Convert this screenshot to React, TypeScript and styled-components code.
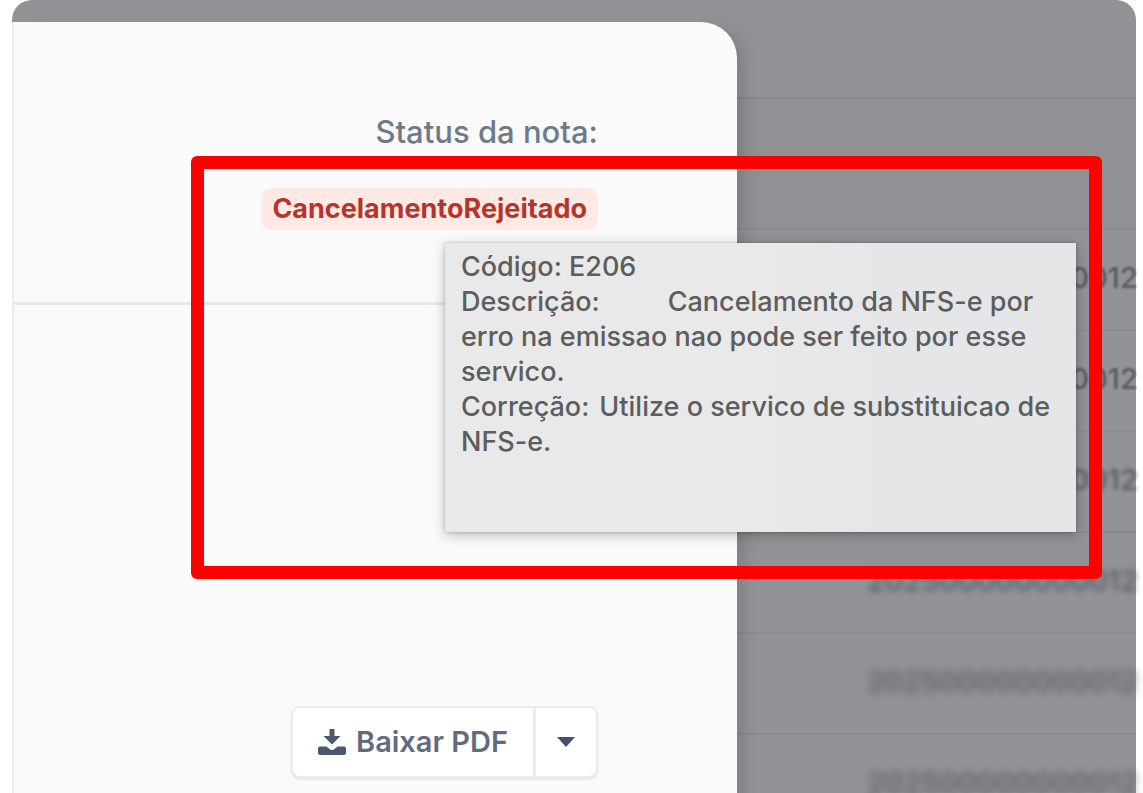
import React from "react";
import styled, { createGlobalStyle } from "styled-components";

const GlobalStyle = createGlobalStyle`
  * { box-sizing: border-box; }
  body {
    margin: 0;
    height: 100vh;
    overflow: hidden;
    background: #ffffff;
    font-family: Inter, "Liberation Sans", sans-serif;
  }
`;

const Backdrop = styled.main`
  display: grid;
  grid-template-columns: minmax(0, 1fr) 399px;
  height: 100vh;
  margin: 0 7px 0 12px;
  background: #929396;
  border-radius: 20px 20px 0 0;
`;

const Modal = styled.section`
  position: relative;
  z-index: 1;
  margin-top: 22px;
  background: #fafafa;
  border-left: 2px solid #ececec;
  border-radius: 0 36px 0 0;
  box-shadow: 14px 0 20px -12px rgba(40, 42, 48, 0.3);
`;

const StatusArea = styled.div`
  display: flex;
  flex-direction: column;
  align-items: flex-end;
  height: 283px;
  padding: 92px 139px 0 0;
  border-bottom: 3px solid #e6e7e9;
`;

const StatusLabel = styled.div`
  color: #6f7a89;
  font-size: 31px;
  font-weight: 500;
  line-height: 36px;
`;

const BadgeAnchor = styled.div`
  position: relative;
  margin-top: 38px;
`;

const Badge = styled.div`
  padding: 0 11px;
  border-radius: 10px;
  background: #ffe9e4;
  color: #b4352e;
  font-size: 27px;
  font-weight: 700;
  line-height: 42px;
`;

const Tooltip = styled.div`
  position: absolute;
  z-index: 1;
  top: 55px;
  right: -478px;
  width: 631px;
  height: 289px;
  padding: 6px 16px;
  background: linear-gradient(90deg, #e9e9e9 50%, #e5e6e8 70%);
  box-shadow: 0 3px 12px rgba(0, 0, 0, 0.26), 0 0 3px rgba(0, 0, 0, 0.2);
  color: #5c5d5e;
  font-size: 27px;
  font-weight: 500;
  line-height: 35px;
`;

const TooltipLine = styled.p`
  margin: 0;
`;

const Term = styled.span<{ $gap: number }>`
  margin-right: ${(p) => p.$gap}px;
`;

const Highlight = styled.div`
  position: absolute;
  z-index: 2;
  top: 134px;
  right: -365px;
  width: 911px;
  height: 423px;
  border: 13px solid #ff0000;
  border-radius: 6px;
  pointer-events: none;
`;

const Actions = styled.div`
  display: flex;
  justify-content: flex-end;
  padding: 401px 139px 0 0;
`;

const ButtonGroup = styled.div`
  display: flex;
  height: 72px;
  border: 2px solid #ececed;
  border-radius: 9px;
  background: #ffffff;
  box-shadow: 0 2px 2px rgba(0, 0, 0, 0.08);
`;

const ActionButton = styled.button`
  display: flex;
  align-items: center;
  justify-content: center;
  gap: 10px;
  padding: 0 25px;
  border: 0;
  border-radius: 9px;
  background: transparent;
  color: #5f6c7c;
  font-family: inherit;
  font-size: 29px;
  font-weight: 600;
  line-height: 36px;
`;

const ToggleButton = styled(ActionButton)`
  width: 63px;
  padding: 0;
  border-left: 3px solid #ececed;
  border-radius: 0;
`;

const Notes = styled.table`
  width: 100%;
  table-layout: fixed;
  border-collapse: collapse;
  align-self: start;
  color: #555a63;
  font-size: 29px;
  font-weight: 500;
`;

const HeadRow = styled.tr<{ $height: number }>`
  height: ${(p) => p.$height}px;
  border-bottom: 2px solid #85888f;
`;

const FilterRow = styled(HeadRow)`
  border-bottom-color: #8b8c90;
  background: #8f9195;
`;

const NoteRow = styled.tr`
  height: 101px;
  border-bottom: 2px solid #8b8c8f;
`;

const NoteNumber = styled.td<{ $blur: number }>`
  padding: 0 0 4px 130px;
  line-height: 36px;
  white-space: nowrap;

  span {
    filter: blur(${(p) => p.$blur}px);
    display: inline-block;
  }
`;

const noteBlurs = [1, 1, 2, 3, 5, 4];

const DownloadIcon = () => (
  <svg width="28" height="27" viewBox="0 0 28 27" fill="#4a596d" aria-hidden="true">
    <path d="M11.500 0h5v7h6L14 15.500 5.500 7h6z" />
    <path d="M2 17.500h6.500l3 2.500q2.500 1.800 5 0l3-2.500H26q2 0 2 2V24q0 2-2 2H2q-2 0-2-2v-4.500q0-2 2-2z" />
  </svg>
);

const CaretIcon = () => (
  <svg width="18" height="10" viewBox="0 0 18 10" fill="#435268" aria-hidden="true">
    <path d="M0 0h18L9 10z" />
  </svg>
);

export default function App() {
  return (
    <>
      <GlobalStyle />
      <Backdrop>
        <Modal>
          <StatusArea>
            <StatusLabel>Status da nota:</StatusLabel>
            <BadgeAnchor>
              <Badge>CancelamentoRejeitado</Badge>
              <Tooltip role="tooltip">
                <TooltipLine>Código: E206</TooltipLine>
                <TooltipLine>
                  <Term $gap={68}>Descrição:</Term>Cancelamento da NFS-e por erro na
                  emissao nao pode ser feito por esse servico.
                </TooltipLine>
                <TooltipLine>
                  <Term $gap={10}>Correção:</Term>Utilize o servico de substituicao de
                  NFS-e.
                </TooltipLine>
              </Tooltip>
            </BadgeAnchor>
          </StatusArea>
          <Actions>
            <ButtonGroup>
              <ActionButton type="button">
                <DownloadIcon />
                Baixar PDF
              </ActionButton>
              <ToggleButton type="button" aria-label="Mais opções">
                <CaretIcon />
              </ToggleButton>
            </ButtonGroup>
          </Actions>
          <Highlight />
        </Modal>
        <Notes>
          <thead>
            <HeadRow $height={98}>
              <td />
            </HeadRow>
            <FilterRow $height={131}>
              <td />
            </FilterRow>
          </thead>
          <tbody>
            {noteBlurs.map((blur, i) => (
              <NoteRow key={i}>
                <NoteNumber $blur={blur}>
                  <span>202500000000012</span>
                </NoteNumber>
              </NoteRow>
            ))}
          </tbody>
        </Notes>
      </Backdrop>
    </>
  );
}
